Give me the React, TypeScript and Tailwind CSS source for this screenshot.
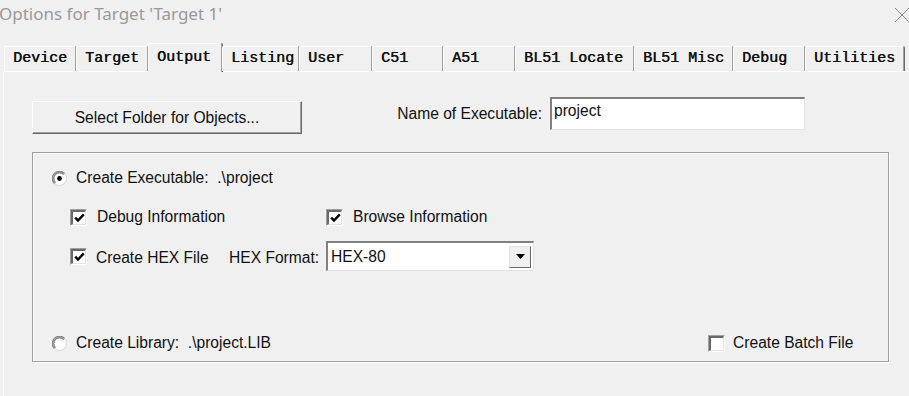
import React from "react";

const TABS = [
    { label: "Device", w: "w-[72px]" },
    { label: "Target", w: "w-[72px]" },
    { label: "Output", w: "w-[74px]", active: true },
    { label: "Listing", w: "w-[77px]" },
    { label: "User", w: "w-[73px]" },
    { label: "C51", w: "w-[71px]" },
    { label: "A51", w: "w-[72px]" },
    { label: "BL51 Locate", w: "w-[119px]" },
    { label: "BL51 Misc", w: "w-[99px]" },
    { label: "Debug", w: "w-[72px]" },
    { label: "Utilities", w: "w-[99px]" },
];

function CheckBox({ checked }: { checked?: boolean }) {
    return (
        <span className="w-[17px] h-[17px] shrink-0 border-t border-l border-t-[#a0a0a0] border-l-[#a0a0a0] border-b border-r border-b-white border-r-white">
            <span className="flex items-center justify-center w-full h-full bg-white border-t-2 border-l-2 border-t-[#696969] border-l-[#696969] border-b border-r border-b-[#e3e3e3] border-r-[#e3e3e3]">
                {checked && (
                    <svg width="11" height="10" viewBox="0 0 11 10">
                        <path d="M1.2 4.6 L4 7.6 L9.8 1.4" stroke="#000" strokeWidth="2.4" fill="none" />
                    </svg>
                )}
            </span>
        </span>
    );
}

function Radio({ checked }: { checked?: boolean }) {
    return (
        <svg width="15" height="15" viewBox="0 0 15 15" className="shrink-0">
            <circle cx="7.5" cy="7.5" r="7" fill="#fff" stroke="#d4d4d4" strokeWidth="1" />
            <path d="M12.5 2.5 A7 7 0 0 0 2.5 12.5" stroke="#8a8a8a" strokeWidth="1.5" fill="none" />
            <path d="M11.5 3.5 A5.6 5.6 0 0 0 3.5 11.5" stroke="#5a5a5a" strokeWidth="1" fill="none" />
            {checked && <circle cx="7.5" cy="7.5" r="2.4" fill="#000" />}
        </svg>
    );
}

export default function App() {
    return (
        <div
            className="w-[909px] h-[396px] bg-[#f0f0f0] overflow-hidden flex flex-col text-[#111]"
            style={{ fontFamily: "'Liberation Sans', Arial, sans-serif" }}
        >
            {/* Title */}
            <div className="h-[43px] flex items-start justify-between">
                <span
                    className="text-[17px] leading-[24px] pt-[2px] -ml-[1px] text-[#999]"
                    style={{ fontFamily: "'Noto Sans', 'Open Sans', sans-serif" }}
                >
                    Options for Target 'Target 1'
                </span>
                <svg width="16" height="16" viewBox="0 0 16 16" className="mt-[7px] -mr-[1px]">
                    <path d="M1 1 L15 15 M15 1 L1 15" stroke="#8a8a8a" strokeWidth="1" />
                </svg>
            </div>

            {/* Tabs */}
            <div
                className="h-[28px] flex items-end pl-[4px] relative z-10"
                style={{ fontFamily: "'Liberation Mono', 'Courier New', monospace" }}
            >
                {TABS.map((t) => (
                    <div
                        key={t.label}
                        className={`${t.w} ${t.active ? "h-[29px] -mb-[1px] bg-[#f0f0f0]" : "h-[25px]"} flex items-center pl-[8px] border-t border-l border-white border-r border-r-[#a0a0a0] shadow-[1px_0_0_#696969] rounded-t-[2px] text-[15px] whitespace-pre text-[#111] [text-shadow:0.5px_0_0_#111]`}
                    >
                        {t.label}
                    </div>
                ))}
            </div>

            {/* Panel */}
            <div className="flex-1 ml-[3px] border-t border-l border-white pl-[28px] pt-[25px] text-[15.6px]">
                <div className="flex items-start">
                    <button className="mt-[4px] w-[270px] h-[33px] bg-[#f0f0f0] border-t border-l border-white border-b border-r border-b-[#696969] border-r-[#696969] shadow-[inset_-1px_-1px_0_#a0a0a0]">
                        Select Folder for Objects...
                    </button>
                    <div className="w-[240px] h-[33px] flex items-center justify-end">
                        Name of Executable:
                    </div>
                    <div className="ml-[8px] w-[255px] h-[33px] bg-white border-t-2 border-l-2 border-t-[#808080] border-l-[#808080] border-b border-r border-b-[#e3e3e3] border-r-[#e3e3e3] pl-[2px] leading-[24px]">
                        project
                    </div>
                </div>

                {/* Group box */}
                <div className="mt-[18px] w-[857px] h-[210px] border border-[#a0a0a0] shadow-[inset_1px_1px_0_#fff,1px_1px_0_#fff] flex flex-col pt-[15px] pb-[8px]">
                    <div className="h-[20px] flex items-center pl-[19px] gap-[9px] whitespace-pre">
                        <Radio checked />
                        <span>Create Executable:  .\project</span>
                    </div>

                    <div className="mt-[19px] h-[20px] flex items-center pl-[37px]">
                        <div className="w-[256px] flex items-center gap-[10px]">
                            <CheckBox checked />
                            <span>Debug Information</span>
                        </div>
                        <div className="flex items-center gap-[10px]">
                            <CheckBox checked />
                            <span>Browse Information</span>
                        </div>
                    </div>

                    <div className="mt-[14px] h-[30px] flex items-center pl-[37px]">
                        <div className="w-[159px] flex items-center gap-[9px] pt-[2px]">
                            <CheckBox checked />
                            <span className="pt-[1px]">Create HEX File</span>
                        </div>
                        <div className="w-[97px] pt-[3px]">HEX Format:</div>
                        <div className="w-[208px] h-[30px] bg-white border-t-2 border-l-2 border-t-[#808080] border-l-[#808080] border-b border-r border-b-[#e3e3e3] border-r-[#e3e3e3] flex items-center pl-[3px] pr-[2px]">
                            <span className="flex-1 pt-[1px]">HEX-80</span>
                            <div className="w-[22px] h-[22px] bg-[#f0f0f0] border-t border-l border-[#e3e3e3] border-b border-r border-b-[#696969] border-r-[#696969] flex items-center justify-center">
                                <svg width="9" height="5" viewBox="0 0 9 5">
                                    <path d="M0 0 L9 0 L4.5 5 Z" fill="#000" />
                                </svg>
                            </div>
                        </div>
                    </div>

                    <div className="mt-auto h-[20px] flex items-center pl-[19px]">
                        <div className="flex-1 flex items-center gap-[9px] whitespace-pre">
                            <Radio />
                            <span>Create Library:  .\project.LIB</span>
                        </div>
                        <div className="w-[180px] flex items-center gap-[8px]">
                            <CheckBox />
                            <span>Create Batch File</span>
                        </div>
                    </div>
                </div>
            </div>
        </div>
    );
}
